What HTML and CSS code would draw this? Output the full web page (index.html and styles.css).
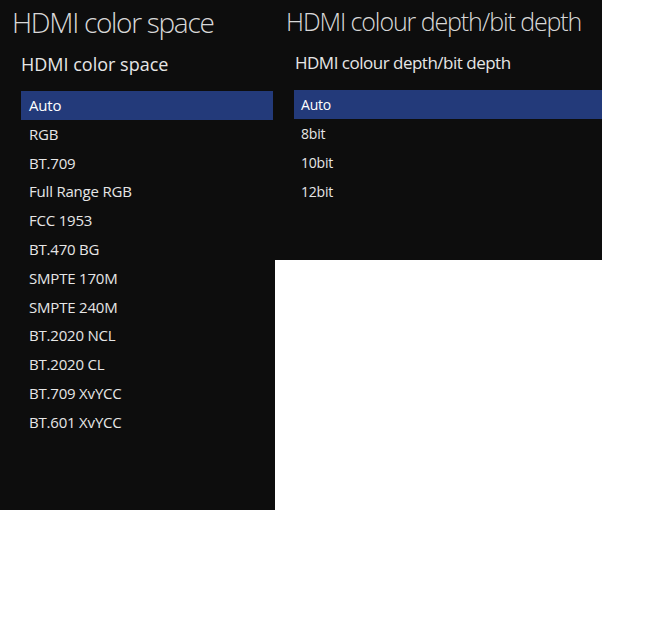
FILE: index.html
```html
<!DOCTYPE html>
<html lang="en">
<head>
    <meta charset="UTF-8">
    <meta name="viewport" content="width=device-width, initial-scale=1.0">
    <title>HDMI settings</title>
    <link rel="stylesheet" href="styles.css">
</head>
<body>
    <div class="panel colorSpace">
        <h1>HDMI color space</h1>
        <h2>HDMI color space</h2>
        <ul class="options">
            <li class="selected">Auto</li>
            <li>RGB</li>
            <li>BT.709</li>
            <li>Full Range RGB</li>
            <li>FCC 1953</li>
            <li>BT.470 BG</li>
            <li>SMPTE 170M</li>
            <li>SMPTE 240M</li>
            <li>BT.2020 NCL</li>
            <li>BT.2020 CL</li>
            <li>BT.709 XvYCC</li>
            <li>BT.601 XvYCC</li>
        </ul>
    </div>

    <div class="panel bitDepth">
        <h1>HDMI colour depth/bit depth</h1>
        <h2>HDMI colour depth/bit depth</h2>
        <ul class="options">
            <li class="selected">Auto</li>
            <li>8bit</li>
            <li>10bit</li>
            <li>12bit</li>
        </ul>
    </div>
</body>
</html>
```

FILE: styles.css
```css
body {
    font-family: "Open Sans", "Noto Sans", sans-serif;
    margin: 0;
    display: flex;
    align-items: flex-start;
    background-color: white;
}

.panel {
    background-color: #0d0d0d;
    color: #e6e6e6;
    box-sizing: border-box;
}

.panel h1 {
    font-weight: 300;
    color: #d8d8d8;
    margin: 0;
    white-space: nowrap;
}

.panel h2 {
    font-weight: 400;
    margin: 0;
    white-space: nowrap;
}

.options {
    list-style: none;
    margin: 0;
    padding: 0;
}

.options li {
    height: 28.8px;
    line-height: 28.8px;
    padding-left: 8px;
}

.options .selected {
    background-color: #233a7a;
    color: white;
}

/* left panel */
.colorSpace {
    width: 275px;
    height: 510px;
    padding: 0 2px 0 21px;
}

.colorSpace h1 {
    font-size: 28px;
    line-height: 44px;
    letter-spacing: -1.3px;
    margin-left: -9px;
}

.colorSpace h2 {
    font-size: 18px;
    line-height: 40px;
    margin-bottom: 7px;
}

.colorSpace .options li {
    font-size: 15px;
    letter-spacing: -0.2px;
}

/* right panel */
.bitDepth {
    width: 327px;
    height: 260px;
    padding: 0 0 0 19px;
}

.bitDepth h1 {
    font-size: 25px;
    line-height: 43px;
    letter-spacing: -1.1px;
    margin-left: -8px;
}

.bitDepth h2 {
    font-size: 17px;
    line-height: 40px;
    letter-spacing: -0.5px;
    margin-bottom: 7px;
    margin-left: 1px;
}

.bitDepth .options li {
    font-size: 14px;
    height: 29px;
    line-height: 30px;
    padding-left: 7px;
    letter-spacing: -0.2px;
}
```
